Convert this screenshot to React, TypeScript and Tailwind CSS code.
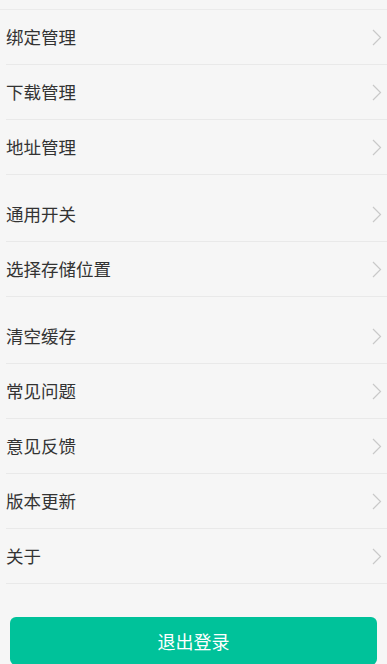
const groups: string[][] = [
  ["绑定管理", "下载管理", "地址管理"],
  ["通用开关", "选择存储位置"],
  ["清空缓存", "常见问题", "意见反馈", "版本更新", "关于"],
];

function Chevron() {
  return (
    <svg width="10" height="17" viewBox="0 0 10 17" fill="none" className="shrink-0">
      <path d="M1 1l7.5 7.5L1 16" stroke="#c9c9c9" strokeWidth="1.2" />
    </svg>
  );
}

function Row({ label }: { label: string }) {
  return (
    <div className="ml-1.5 flex h-[55px] items-center justify-between border-b border-[#e9e9e9] pr-[5px]">
      <span className="text-[17.5px] text-[#333333]">{label}</span>
      <Chevron />
    </div>
  );
}

export default function App() {
  return (
    <div
      className="h-[664px] w-[387px] overflow-hidden bg-[#f6f6f6]"
      style={{ fontFamily: '"Noto Sans CJK SC", "Noto Sans", sans-serif' }}
    >
      <div className="h-[10px] border-b border-[#ebebeb]" />
      <div className="flex flex-col gap-[12px]">
        {groups.map((g, i) => (
          <div key={i}>
            {g.map(label => (
              <Row key={label} label={label} />
            ))}
          </div>
        ))}
      </div>
      <div className="px-[10px] pt-[33px]">
        <button className="flex h-[48px] w-full items-center justify-center rounded-[6px] bg-[#00c29a] text-[18px] text-white">
          退出登录
        </button>
      </div>
    </div>
  );
}
